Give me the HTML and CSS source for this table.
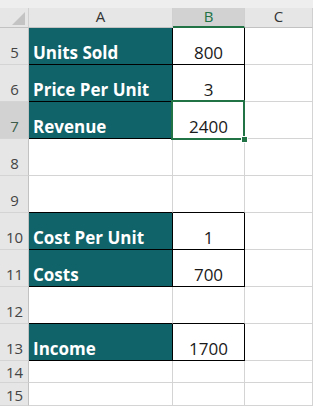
FILE: index.html
```html
<!DOCTYPE html>
<html>
<head>
<meta charset="utf-8">
<link rel="stylesheet" href="styles.css">
</head>
<body>
<div class="strip"></div>
<div class="sheet">
  <div class="hd corner"><svg class="tri" width="13" height="13" viewBox="0 0 13 13"><polygon points="13,0 13,13 0,13" fill="#c3c3c3"/></svg></div>
  <div class="hd col">A</div>
  <div class="hd col sel-col">B</div>
  <div class="hd col">C</div>

  <div class="rh">5</div>
  <div class="c lab k">Units Sold</div>
  <div class="c num k">800</div>
  <div class="c"></div>

  <div class="rh">6</div>
  <div class="c lab k">Price Per Unit</div>
  <div class="c num k">3</div>
  <div class="c"></div>

  <div class="rh sel-row">7</div>
  <div class="c lab k">Revenue</div>
  <div class="c num k active">2400</div>
  <div class="c"></div>

  <div class="rh">8</div>
  <div class="c"></div>
  <div class="c"></div>
  <div class="c"></div>

  <div class="rh">9</div>
  <div class="c kb"></div>
  <div class="c kb"></div>
  <div class="c"></div>

  <div class="rh">10</div>
  <div class="c lab k">Cost Per Unit</div>
  <div class="c num k">1</div>
  <div class="c"></div>

  <div class="rh">11</div>
  <div class="c lab k">Costs</div>
  <div class="c num k">700</div>
  <div class="c"></div>

  <div class="rh">12</div>
  <div class="c kb"></div>
  <div class="c kb"></div>
  <div class="c"></div>

  <div class="rh">13</div>
  <div class="c lab k">Income</div>
  <div class="c num k">1700</div>
  <div class="c"></div>

  <div class="rh sm">14</div>
  <div class="c"></div>
  <div class="c"></div>
  <div class="c"></div>

  <div class="rh sm">15</div>
  <div class="c"></div>
  <div class="c"></div>
  <div class="c"></div>
</div>
</body>
</html>
```

FILE: styles.css
```css
html, body {
  margin: 0;
  padding: 0;
  background: #ffffff;
  font-family: "Open Sans", "Noto Sans", sans-serif;
  overflow: hidden;
}

.strip {
  height: 8px;
  background: #eeeeee;
}

.sheet {
  display: grid;
  grid-template-columns: 29px 144px 72px 68px;
  grid-template-rows: 20px repeat(9, 37px) 22px 23px;
}

.sheet > div {
  box-sizing: border-box;
}

.hd {
  background: #e6e6e6;
  border-right: 1px solid #d0d0d0;
  border-bottom: 1px solid #c2c2c2;
}

.corner {
  display: flex;
  align-items: flex-end;
  justify-content: flex-end;
  padding: 0 3px 2px 0;
}

.tri {
  display: block;
}

.col {
  display: flex;
  justify-content: center;
  align-items: flex-end;
  font-size: 15px;
  line-height: 1;
  color: #333333;
  padding-bottom: 3px;
}

.sel-col {
  background: #d2d2d2;
  color: #217346;
  border-bottom: 2px solid #217346;
  padding-bottom: 2px;
}

.rh {
  background: #e6e6e6;
  border-right: 1px solid #c2c2c2;
  border-bottom: 1px solid #d4d4d4;
  display: flex;
  justify-content: center;
  align-items: flex-end;
  font-size: 15px;
  line-height: 1;
  color: #444444;
  padding-bottom: 4px;
  padding-left: 1px;
}

.rh.sm {
  padding-bottom: 2px;
}

.sel-row {
  background: #d2d2d2;
  color: #3d5d4a;
}

.c {
  border-right: 1px solid #d4d4d4;
  border-bottom: 1px solid #d4d4d4;
  display: flex;
  align-items: flex-end;
  font-size: 17px;
  line-height: 1;
  padding-bottom: 3px;
}

.k {
  border-right-color: #000000;
  border-bottom-color: #000000;
}

.kb {
  border-bottom-color: #000000;
}

.lab {
  background: #11636a;
  color: #ffffff;
  font-weight: 700;
  padding-left: 4px;
}

.num {
  justify-content: center;
  color: #1a1a1a;
}

.active {
  position: relative;
}

.active::after {
  content: "";
  position: absolute;
  left: -2px;
  top: -2px;
  right: -1px;
  bottom: -2px;
  border: 2px solid #217346;
  pointer-events: none;
}

.active::before {
  content: "";
  position: absolute;
  right: -4px;
  bottom: -5px;
  width: 5px;
  height: 5px;
  background: #217346;
  border: 1px solid #ffffff;
  z-index: 2;
}
```
